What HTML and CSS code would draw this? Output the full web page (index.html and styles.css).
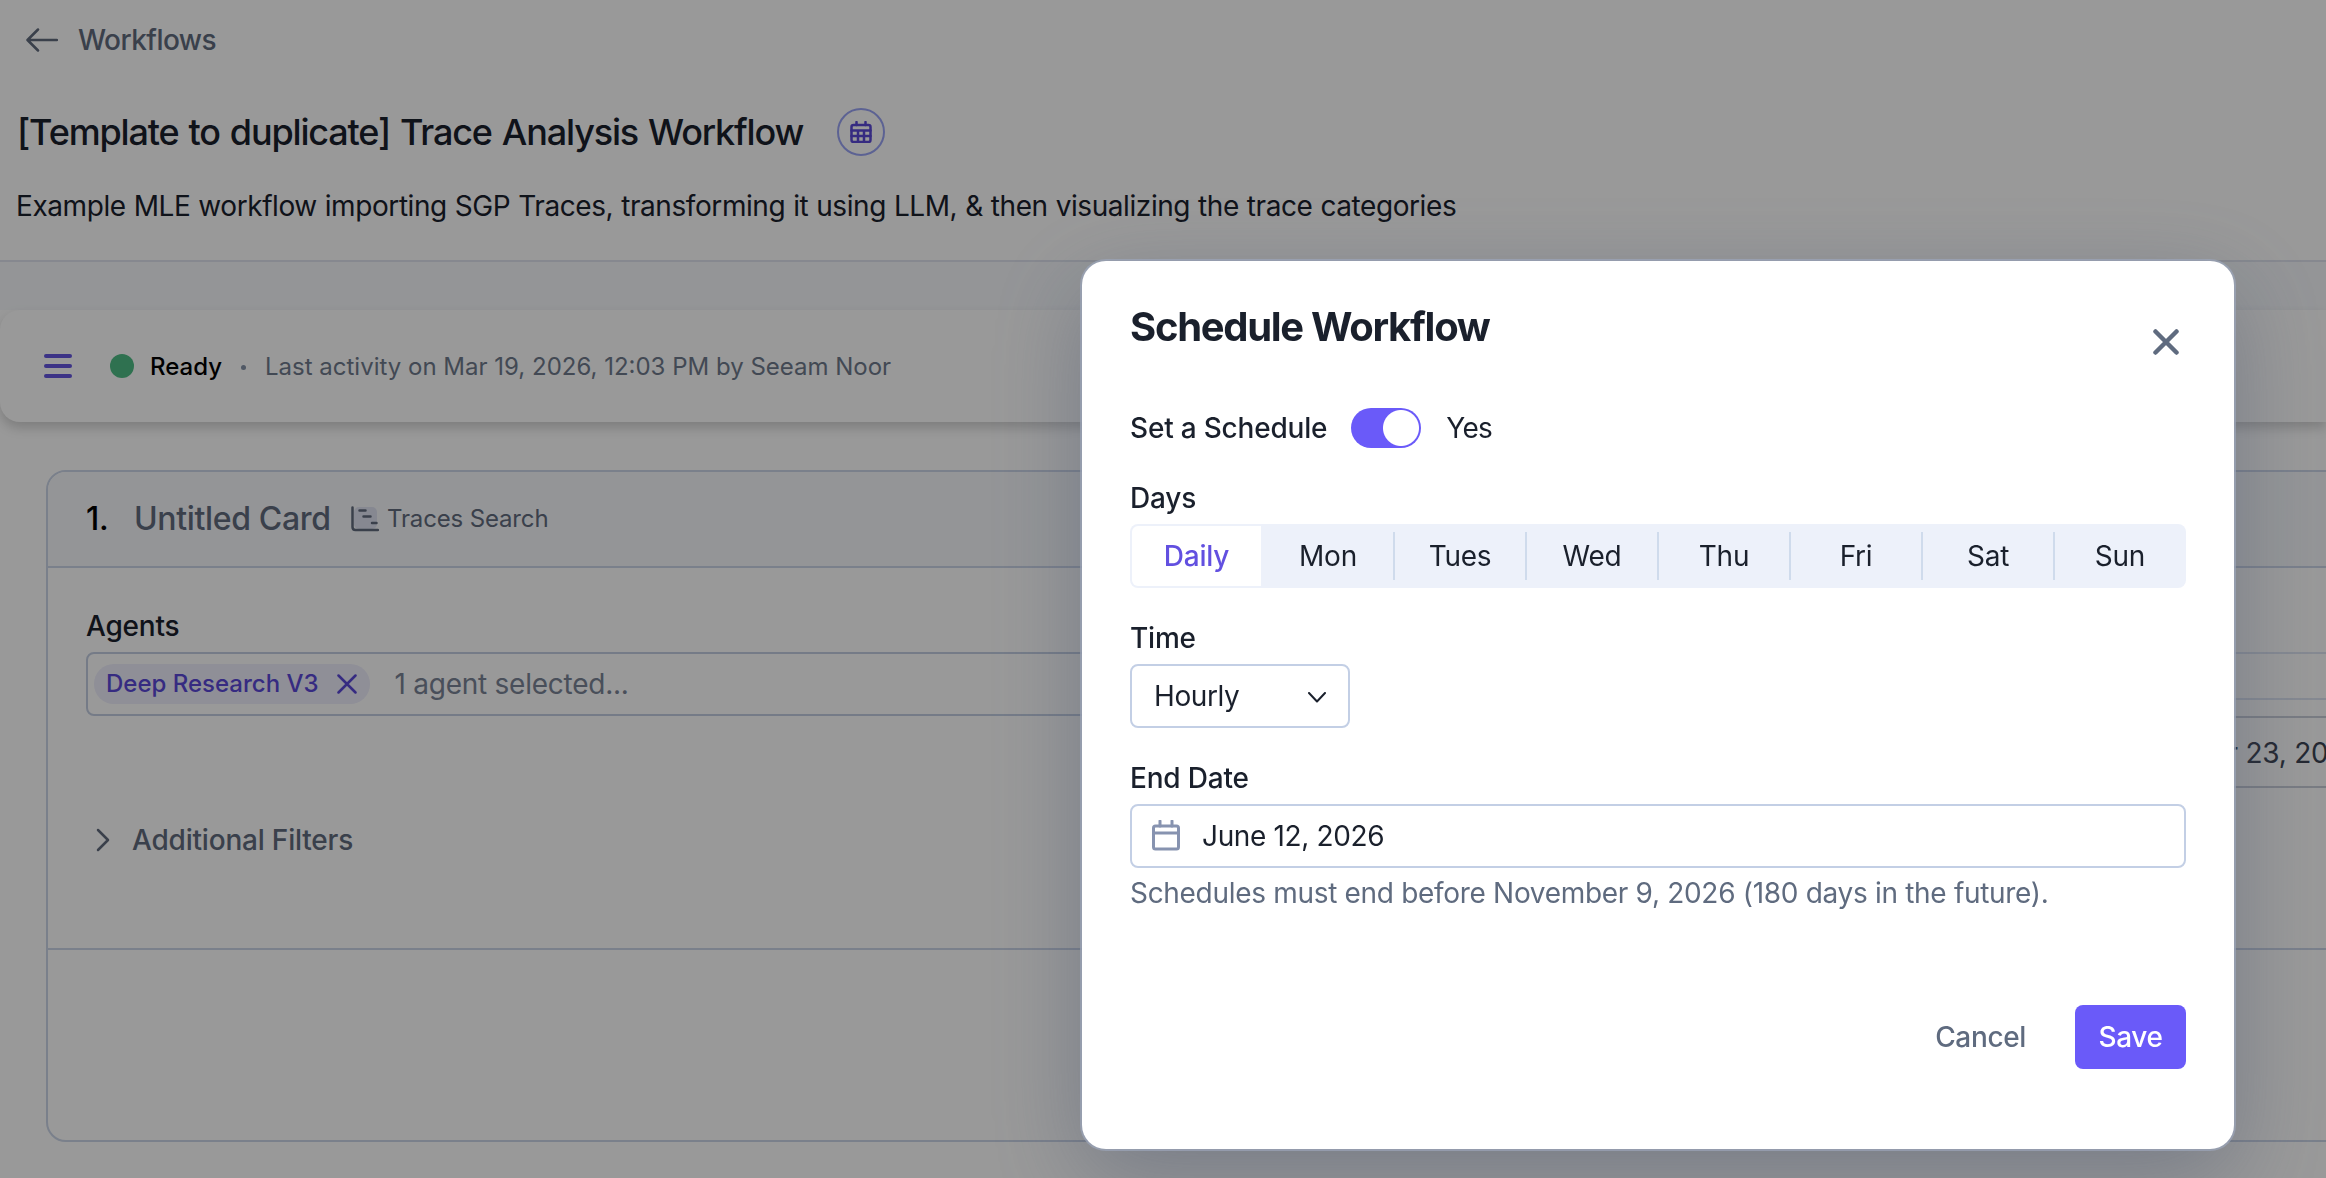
FILE: index.html
```html
<!DOCTYPE html>
<html lang="en">
    <head>
        <meta charset="utf-8">
        <meta name="viewport" content="width=device-width, initial-scale=1.0">
        <title>Trace Analysis Workflow</title>
        <link rel="stylesheet" href="styles.css">
    </head>
    <body>
        <div class="page">
            <header class="header">
                <a class="back">
                    <svg width="32" height="24" viewBox="0 0 32 24"><path d="M31 12H2M12 1.5L1.500 12L12 22.500"/></svg>
                    <span class="back-text">Workflows</span>
                </a>
                <div class="title-row">
                    <h1 class="title">[Template to duplicate] Trace Analysis Workflow</h1>
                    <span class="sched">
                        <svg width="22" height="22" viewBox="0 0 22 22"><rect x="1.500" y="4" width="19" height="17" rx="2"/><path d="M1.500 9.500H20.500M1.500 15H20.500M8 9.500V21M14 9.500V21M6.500 1V4M15.500 1V4"/></svg>
                    </span>
                </div>
                <p class="desc">Example MLE workflow importing SGP Traces, transforming it using LLM, &amp; then visualizing the trace categories</p>
            </header>
            <div class="band"></div>
            <div class="status">
                <div class="menu"><i></i><i></i><i></i></div>
                <span class="dot"></span>
                <span class="ready">Ready</span>
                <span class="sep"></span>
                <span class="activity">Last activity on Mar 19, 2026, 12:03 PM by Seeam Noor</span>
            </div>
            <section class="card">
                <div class="card-head">
                    <span class="num">1.</span>
                    <span class="name">Untitled Card</span>
                    <svg width="28" height="26" viewBox="0 0 28 26"><rect class="fill" x="3" y="1" width="23" height="22" rx="5"/><path d="M1.500 1.500V21Q1.500 24 4.500 24H27M8.500 4.500H14.500M12.500 10.500H19.500M21 17H25.500"/></svg>
                    <span class="type">Traces Search</span>
                </div>
                <div class="card-body">
                    <div class="agents">
                        <label class="label">Agents</label>
                        <div class="agent-box">
                            <span class="chip">
                                <span class="chip-text">Deep Research V3</span>
                                <svg width="20" height="20" viewBox="0 0 20 20"><path d="M1.500 1.500L18.500 18.500M18.500 1.500L1.500 18.500"/></svg>
                            </span>
                            <span class="hint">1 agent selected...</span>
                        </div>
                    </div>
                    <div class="dates">
                        <div class="range"></div>
                        <div class="date">October 23, 2025</div>
                    </div>
                </div>
                <div class="filters">
                    <svg width="14" height="24" viewBox="0 0 14 24"><path d="M2 2L12 12L2 22"/></svg>
                    <span class="filters-text">Additional Filters</span>
                </div>
                <div class="card-foot"></div>
            </section>
        </div>
        <div class="overlay">
            <div class="modal">
                <div class="modal-head">
                    <h2 class="modal-title">Schedule Workflow</h2>
                    <svg class="close" width="26" height="26" viewBox="0 0 26 26"><path d="M2.500 2.500L23.500 23.500M23.500 2.500L2.500 23.500"/></svg>
                </div>
                <div class="switch-row">
                    <span class="label">Set a Schedule</span>
                    <span class="switch"></span>
                    <span class="yes">Yes</span>
                </div>
                <label class="label days-label">Days</label>
                <div class="days">
                    <div class="day on">Daily</div>
                    <div class="day">Mon</div>
                    <div class="day">Tues</div>
                    <div class="day">Wed</div>
                    <div class="day">Thu</div>
                    <div class="day">Fri</div>
                    <div class="day">Sat</div>
                    <div class="day">Sun</div>
                </div>
                <label class="label time-label">Time</label>
                <div class="select">
                    <span class="select-text">Hourly</span>
                    <svg width="18" height="11" viewBox="0 0 18 11"><path d="M1 1L9 9.500L17 1"/></svg>
                </div>
                <label class="label end-label">End Date</label>
                <div class="end-date">
                    <svg width="28" height="32" viewBox="0 0 28 32"><rect x="1.500" y="6" width="25" height="23"  rx="2"/><path d="M2 13H26M8 1V6M20 1V6"/></svg>
                    <span class="end-text">June 12, 2026</span>
                </div>
                <p class="note">Schedules must end before November 9, 2026 (180 days in the future).</p>
                <div class="buttons">
                    <button class="cancel">Cancel</button>
                    <button class="save">Save</button>
                </div>
            </div>
        </div>
    </body>
</html>
```
FILE: styles.css
```css
* {
    box-sizing: border-box;
}
body {
    margin: 0;
    height: 1178px;
    overflow: hidden;
    background-color: white;
    color: #1a202c;
    font-family: Inter, "Liberation Sans", sans-serif;
    font-size: 28px;
    line-height: 40px;
    letter-spacing: -0.25px;
}
h1, h2, p {
    margin: 0;
}
svg {
    flex: none;
    fill: none;
    stroke: currentColor;
    stroke-width: 2.5;
    stroke-linecap: round;
    stroke-linejoin: round;
}
.page {
    width: 2326px;
    height: 1178px;
    overflow: hidden;
}
.header {
    height: 262px;
    padding: 20px 17px 0;
    border-bottom: 2px solid #dfe3ee;
}
.back {
    display: flex;
    align-items: center;
    gap: 20px;
    padding-left: 9px;
    color: #616b7e;
    font-weight: 500;
    letter-spacing: -0.55px;
}
.title-row {
    display: flex;
    align-items: center;
    gap: 34px;
    height: 48px;
    margin-top: 48px;
}
.title {
    font-size: 36px;
    font-weight: 500;
    letter-spacing: -1.15px;
    word-spacing: 1.5px;
}
.sched {
    display: flex;
    align-items: center;
    justify-content: center;
    width: 48px;
    height: 48px;
    border: 2px solid #9aa4f5;
    border-radius: 50%;
    color: #5a48d8;
}
.desc {
    margin: 30px 0 0 -1px;
    letter-spacing: -0.42px;
    word-spacing: 0.5px;
}
.band {
    height: 48px;
    background-color: #f7f9fc;
}
.status {
    display: flex;
    align-items: center;
    height: 112px;
    padding-left: 44px;
    border-radius: 20px 0 0 20px;
    background-color: white;
    box-shadow: 0 6px 12px rgba(0, 0, 0, 0.18);
    font-size: 24px;
    letter-spacing: 0;
}
.menu {
    display: flex;
    flex-direction: column;
    gap: 6px;
    width: 28px;
}
.menu i {
    height: 4px;
    border-radius: 2px;
    background-color: #6455e0;
}
.dot {
    width: 24px;
    height: 24px;
    margin-left: 38px;
    border-radius: 50%;
    background-color: #4fbd85;
}
.ready {
    margin-left: 16px;
    padding-top: 2px;
    color: black;
    font-weight: 500;
}
.sep {
    width: 5px;
    height: 5px;
    margin: 3px 19px 0;
    border-radius: 50%;
    background-color: #8593a8;
}
.activity {
    padding-top: 2px;
    color: #6f7a8c;
}
.card {
    height: 672px;
    margin: 48px -40px 0 46px;
    border: 2px solid #cbd5e8;
    border-radius: 20px;
    overflow: hidden;
}
.card-head {
    display: flex;
    align-items: center;
    height: 96px;
    padding-left: 38px;
    background-color: #f7f9fc;
    border-bottom: 2px solid #cbd5e8;
    color: #616b7e;
}
.num {
    width: 48px;
    color: black;
    font-size: 32px;
    font-weight: 500;
}
.name {
    width: 217px;
    font-size: 32px;
    font-weight: 500;
    letter-spacing: -0.35px;
}
.type {
    margin-left: 8px;
    font-size: 24px;
    letter-spacing: -0.15px;
}
.fill {
    fill: #dfe3f2;
    stroke: none;
}
.card-body {
    display: flex;
    height: 248px;
}
.agents {
    width: 1120px;
    margin-left: 38px;
    padding-top: 38px;
}
.label {
    display: block;
    font-weight: 500;
    letter-spacing: -0.2px;
}
.agent-box {
    display: flex;
    align-items: center;
    height: 64px;
    margin-top: 6px;
    padding-left: 6px;
    border: 2px solid #c3cee2;
    border-radius: 8px;
}
.chip {
    display: flex;
    align-items: center;
    gap: 18px;
    height: 40px;
    padding: 0 13px 0 12px;
    border-radius: 20px;
    background-color: #eeeefc;
    color: #5a48d8;
    font-size: 24px;
    font-weight: 500;
    letter-spacing: 0;
}
.hint {
    margin-left: 25px;
    color: #7a8496;
}
.dates {
    flex: 1;
    padding-top: 84px;
}
.range {
    height: 48px;
    border: 2px solid #dde4f2;
}
.date {
    height: 72px;
    margin-top: 16px;
    padding: 15px 0 0 926px;
    border: 2px solid #c9ced9;
    white-space: nowrap;
    color: #3c4352;
}
.filters {
    display: flex;
    align-items: center;
    gap: 22px;
    height: 134px;
    padding: 0 0 84px 48px;
    color: #616b7e;
    font-weight: 500;
    letter-spacing: -0.2px;
    border-bottom: 2px solid #cbd5e8;
}
.overlay {
    position: fixed;
    inset: 0;
    background-color: rgba(0, 0, 0, 0.4);
}
.modal {
    display: flex;
    flex-direction: column;
    width: 1152px;
    height: 888px;
    margin: 261px 0 0 1082px;
    padding: 40px 48px 0;
    border-radius: 24px;
    background-color: white;
    box-shadow: 0 0 0 2px rgba(154, 163, 181, 0.8), 0 28px 90px 0 rgba(70, 82, 108, 0.42);
}
.modal-head {
    display: flex;
    justify-content: space-between;
    height: 80px;
}
.modal-title {
    height: 52px;
    font-size: 40px;
    line-height: 52px;
    font-weight: 700;
    letter-spacing: -1.3px;
}
.close {
    margin: 28px 7px 0 0;
    color: #5f6b7f;
    stroke-width: 4.500;
}
.switch-row {
    display: flex;
    align-items: center;
    height: 40px;
    margin-top: 27px;
}
.switch {
    width: 70px;
    height: 40px;
    margin: 0 25px 0 24px;
    border-radius: 20px;
    background: radial-gradient(circle at 50px 20px, white 17.500px, #6a5af9 18.500px);
}
.yes {
    letter-spacing: -0.7px;
}
.days-label {
    margin-top: 30px;
}
.days {
    display: flex;
    align-items: center;
    height: 64px;
    margin-top: 6px;
    border-radius: 8px;
    background-color: #edf1fa;
}
.day {
    width: 132px;
    height: 48px;
    line-height: 48px;
    border-left: 2px solid #cfdbec;
    text-align: center;
}
.on {
    width: 129px;
    height: 60px;
    margin-left: 2px;
    line-height: 60px;
    border: none;
    border-radius: 6px 0 0 6px;
    background-color: white;
    color: #6250e0;
    font-weight: 500;
}
.on + .day {
    border-color: transparent;
}
.time-label, .end-label {
    margin-top: 30px;
}
.select {
    display: flex;
    align-items: center;
    justify-content: space-between;
    width: 220px;
    height: 64px;
    margin-top: 6px;
    padding: 0 22px;
    border: 2px solid #c3cfe5;
    border-radius: 8px;
    letter-spacing: -0.4px;
}
.select svg {
    margin-top: 3px;
    stroke-width: 2;
}
.end-date {
    display: flex;
    align-items: center;
    gap: 22px;
    height: 64px;
    margin-top: 6px;
    padding-left: 20px;
    border: 2px solid #c3cfe5;
    border-radius: 8px;
    letter-spacing: -0.35px;
}
.end-date svg {
    color: #8793b0;
    stroke-width: 3;
}
.note {
    margin-top: 5px;
    color: #5f6b7f;
    letter-spacing: -0.31px;
}
.buttons {
    display: flex;
    justify-content: flex-end;
    margin-top: 92px;
}
.cancel, .save {
    height: 64px;
    padding: 0 24px;
    border: none;
    border-radius: 8px;
    background-color: transparent;
    color: #5f6b7f;
    font: inherit;
    font-weight: 500;
    letter-spacing: -0.35px;
}
.save {
    width: 111px;
    margin-left: 25px;
    padding: 0;
    background-color: #6a5af9;
    color: white;
}
```
